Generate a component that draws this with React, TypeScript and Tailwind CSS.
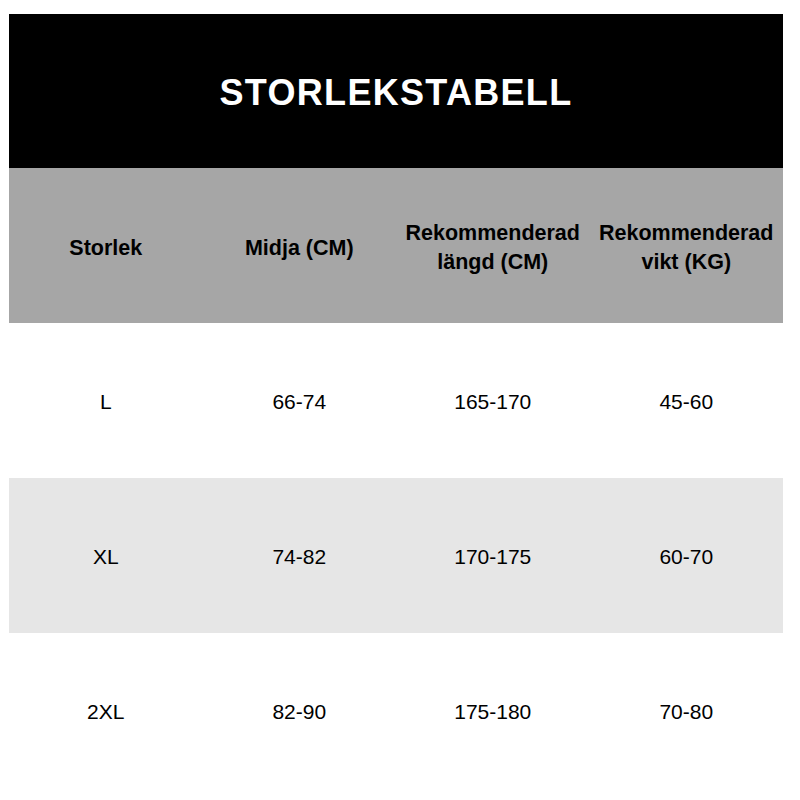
const HEADERS = ['Storlek', 'Midja (CM)', 'Rekommenderad längd (CM)', 'Rekommenderad vikt (KG)']

const ROWS = [
  { size: 'L', waist: '66-74', height: '165-170', weight: '45-60', bg: 'bg-white' },
  { size: 'XL', waist: '74-82', height: '170-175', weight: '60-70', bg: 'bg-[#e6e6e6]' },
  { size: '2XL', waist: '82-90', height: '175-180', weight: '70-80', bg: 'bg-white' },
]

export default function App() {
  return (
    <div className="w-[800px] h-[800px] bg-white pt-[14px] pl-[9px] font-['Liberation_Sans',Arial,sans-serif]">
      <div className="w-[774px]">
        {/* Title */}
        <div className="h-[154px] bg-black flex items-center justify-center pt-[3px]">
          <h1 className="text-white text-[36px] font-bold tracking-[1.3px] leading-none">STORLEKSTABELL</h1>
        </div>

        {/* Column headers */}
        <div className="h-[155px] bg-[#a6a6a6] grid grid-cols-4 items-center pt-[5px]">
          {HEADERS.map((h) => (
            <div key={h} className="text-center text-black font-bold text-[21.5px] leading-[29px] px-1">
              {h}
            </div>
          ))}
        </div>

        {/* Rows */}
        {ROWS.map((r) => (
          <div key={r.size} className={`h-[155px] grid grid-cols-4 items-center pt-[2px] ${r.bg}`}>
            {[r.size, r.waist, r.height, r.weight].map((v, i) => (
              <div key={i} className="text-center text-black text-[21px] leading-none">
                {v}
              </div>
            ))}
          </div>
        ))}
      </div>
    </div>
  )
}
